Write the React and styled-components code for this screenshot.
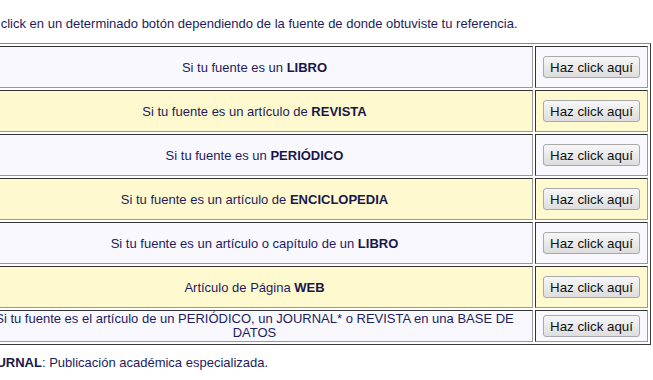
import React from 'react';
import styled, { createGlobalStyle } from 'styled-components';

const GlobalStyle = createGlobalStyle`
  html, body {
    margin: 0;
    padding: 0;
    background: #ffffff;
    overflow: hidden;
  }
`;

const sources = [
  { lead: 'Si tu fuente es un ', strong: 'LIBRO', tone: 'light' },
  { lead: 'Si tu fuente es un artículo de ', strong: 'REVISTA', tone: 'yellow' },
  { lead: 'Si tu fuente es un ', strong: 'PERIÓDICO', tone: 'light' },
  { lead: 'Si tu fuente es un artículo de ', strong: 'ENCICLOPEDIA', tone: 'yellow' },
  { lead: 'Si tu fuente es un artículo o capítulo de un ', strong: 'LIBRO', tone: 'light' },
  { lead: 'Artículo de Página ', strong: 'WEB', tone: 'yellow' },
];

const App = () => {
  return (
    <>
      <GlobalStyle />
      <Page>
        <Intro>
          Haz click en un determinado botón dependiendo de la fuente de donde obtuviste tu referencia.
        </Intro>
        <SourceTable>
          <tbody>
            {sources.map((s, i) => (
              <Row key={i} $tone={s.tone}>
                <TextCell>
                  {s.lead}<b>{s.strong}</b>
                </TextCell>
                <ButtonCell>
                  <ClickButton type="button">Haz click aquí</ClickButton>
                </ButtonCell>
              </Row>
            ))}
            <Row $tone="light" $auto>
              <TextCell>
                Si tu fuente es el artículo de un PERIÓDICO, un JOURNAL* o REVISTA en una BASE DE DATOS
              </TextCell>
              <ButtonCell>
                <ClickButton type="button">Haz click aquí</ClickButton>
              </ButtonCell>
            </Row>
          </tbody>
        </SourceTable>
        <Note>
          <b>*JOURNAL</b>: Publicación académica especializada.
        </Note>
      </Page>
    </>
  );
};

export default App;

const Page = styled.div`
  margin-left: -26px;
  padding-top: 16px;
  font-family: "Liberation Sans", Arial, sans-serif;
  font-size: 13px;
  line-height: 15px;
  color: #1c1c5e;
`;

const Intro = styled.p`
  margin: 0 0 12px 0;
`;

const SourceTable = styled.table`
  width: 678px;
  margin-left: -1px;
  border-collapse: separate;
  border-spacing: 2px;
  border: 1px solid;
  border-color: #8a8a8a #3a3a3a #3a3a3a #8a8a8a;
  margin-bottom: 10px;
`;

const Row = styled.tr`
  background: ${p => (p.$tone === 'yellow' ? '#fff9cf' : '#f8f8fe')};
  td {
    height: ${p => (p.$auto ? 'auto' : '38px')};
    line-height: ${p => (p.$auto ? '14px' : '15px')};
  }
`;

const Cell = styled.td`
  padding: 1px;
  border: 1px solid;
  border-color: #333333 #999999 #999999 #333333;
  vertical-align: middle;
`;

const TextCell = styled(Cell)`
  text-align: center;
  b {
    color: #17174a;
  }
`;

const ButtonCell = styled(Cell)`
  width: 109px;
  text-align: center;
`;

const ClickButton = styled.button`
  height: 22px;
  padding: 1px 6px;
  font-family: "Liberation Sans", Arial, sans-serif;
  font-size: 13.33px;
  color: #111111;
  background: linear-gradient(#f7f7f7, #dddddd);
  border: 1px solid #a9a9a9;
  border-radius: 3px;
  cursor: pointer;
  vertical-align: middle;
`;

const Note = styled.p`
  margin: 0;
  b {
    color: #17174a;
  }
`;
